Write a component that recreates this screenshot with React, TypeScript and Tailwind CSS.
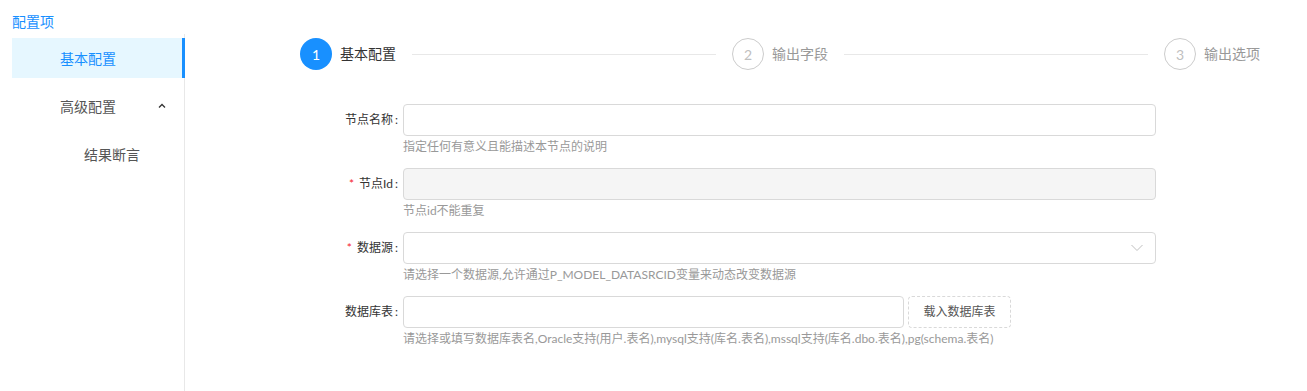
import React from "react";

const font = { fontFamily: 'Lato, "Noto Sans CJK SC", sans-serif' };

function Step({ n, title, active, last }: { n: number; title: string; active?: boolean; last?: boolean }) {
  return (
    <div className={`flex items-center ${last ? "flex-none" : "flex-1"}`}>
      <div
        className={`w-8 h-8 rounded-full flex items-center justify-center text-[14px] flex-none ${
          active ? "bg-[#1890ff] text-white" : "border border-[#cccccc] text-[#bfbfbf]"
        }`}
      >
        {n}
      </div>
      <div className={`ml-2 text-[14px] leading-[32px] ${active ? "text-[#333333]" : "text-[#999999]"}`}>{title}</div>
      {!last && <div className="flex-1 h-px bg-[#e8e8e8] mx-4" />}
    </div>
  );
}

function FormRow({
  label,
  required,
  help,
  children,
}: {
  label: string;
  required?: boolean;
  help: string;
  children: React.ReactNode;
}) {
  return (
    <div className="flex mb-[10px]">
      <div className="w-[218px] flex-none flex items-center justify-end h-8 pr-[5px] text-[12px] text-[#333333]">
        {required && <span className="text-[#f5222d] mr-[5px] text-[12px]">*</span>}
        <span>{label}</span>
        <span className="ml-[2px]">:</span>
      </div>
      <div className="w-[753px] flex-none">
        {children}
        <div className="text-[12px] leading-[22px] text-[#999999] whitespace-nowrap">{help}</div>
      </div>
    </div>
  );
}

export default function App() {
  return (
    <div className="h-screen w-full bg-white flex" style={font}>
      <div className="w-[185px] flex-none flex flex-col pl-3">
        <div className="text-[14px] text-[#1890ff] h-[34px] pt-[12px] leading-[20px]">配置项</div>
        <div className="flex-1 border-r border-[#e8e8e8] pt-1">
          <div className="h-10 bg-[#e6f7ff] border-r-[3px] border-[#1890ff] text-[#1890ff] text-[14px] flex items-center pl-12 mr-[-1px]">
            基本配置
          </div>
          <div className="h-10 mt-2 text-[14px] text-[#555555] flex items-center pl-12 pr-[18px] justify-between">
            <span>高级配置</span>
            <svg width="8" height="6" viewBox="0 0 8 6">
              <path d="M1 4.5 L4 1.5 L7 4.5" fill="none" stroke="#333" strokeWidth="1.3" />
            </svg>
          </div>
          <div className="h-10 mt-2 text-[14px] text-[#555555] flex items-center pl-[72px]">结果断言</div>
        </div>
      </div>
      <div className="flex-1 flex flex-col">
        <div className="flex w-[960px] ml-[115px] mt-[38px]">
          <Step n={1} title="基本配置" active />
          <Step n={2} title="输出字段" />
          <Step n={3} title="输出选项" last />
        </div>
        <div className="mt-[34px]">
          <FormRow label="节点名称" help="指定任何有意义且能描述本节点的说明">
            <div className="h-8 border border-[#d9d9d9] rounded bg-white" />
          </FormRow>
          <FormRow label="节点Id" required help="节点id不能重复">
            <div className="h-8 border border-[#d9d9d9] rounded bg-[#f5f5f5]" />
          </FormRow>
          <FormRow label="数据源" required help="请选择一个数据源,允许通过P_MODEL_DATASRCID变量来动态改变数据源">
            <div className="h-8 border border-[#d9d9d9] rounded bg-white flex items-center justify-end pr-[12px]">
              <svg width="12" height="8" viewBox="0 0 12 8">
                <path d="M0.5 1 L6 6.5 L11.5 1" fill="none" stroke="#bfbfbf" strokeWidth="1" />
              </svg>
            </div>
          </FormRow>
          <FormRow
            label="数据库表"
            help="请选择或填写数据库表名,Oracle支持(用户.表名),mysql支持(库名.表名),mssql支持(库名.dbo.表名),pg(schema.表名)"
          >
            <div className="flex h-8">
              <div className="w-[501px] h-8 border border-[#d9d9d9] rounded bg-white" />
              <div className="ml-1 h-8 w-[103px] border border-dashed border-[#d9d9d9] rounded flex items-center justify-center text-[12px] text-[#555555]">
                载入数据库表
              </div>
            </div>
          </FormRow>
        </div>
      </div>
    </div>
  );
}
